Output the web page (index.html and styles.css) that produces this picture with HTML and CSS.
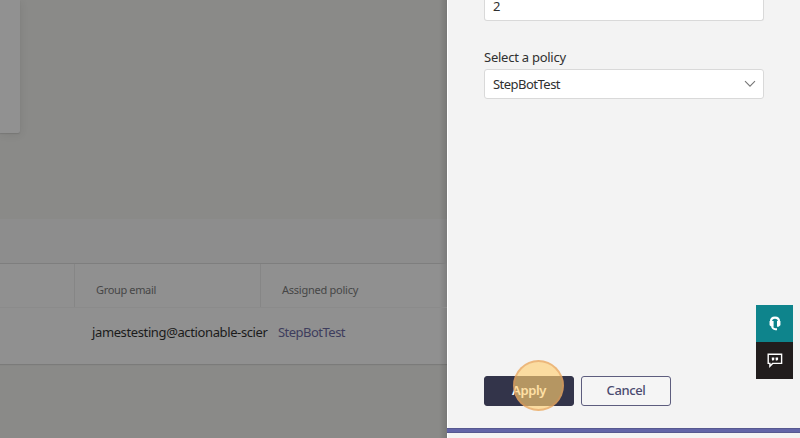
FILE: index.html
```html
<!DOCTYPE html>
<html lang="en">
<head>
<meta charset="utf-8">
<title>Group policy assignment</title>
<link rel="stylesheet" href="styles.css">
</head>
<body>
<div class="app">
  <main class="page">
    <div class="card"></div>
    <section class="table">
      <div class="toolbar"></div>
      <div class="row head">
        <div class="cell first"></div>
        <div class="cell email"><span class="t-group">Group email</span></div>
        <div class="cell policy"><span class="t-assigned">Assigned policy</span></div>
      </div>
      <div class="row body">
        <div class="cell first"></div>
        <div class="cell email"><span class="t-mail">jamestesting@actionable-scier</span></div>
        <div class="cell policy"><a class="t-step">StepBotTest</a></div>
      </div>
    </section>
  </main>
  <aside class="panel">
    <div class="form">
      <div class="input rank"><span>2</span></div>
      <label class="label"><span>Select a policy</span></label>
      <div class="input select">
        <span class="t-step">StepBotTest</span>
        <svg width="12" height="8" viewBox="0 0 12 8"><path d="M1 1.2 6 6.2 11 1.2" fill="none" stroke="#777" stroke-width="1.1"/></svg>
      </div>
    </div>
    <div class="actions">
      <button class="btn primary"><span class="t-apply">Apply</span></button>
      <button class="btn"><span class="t-cancel">Cancel</span></button>
    </div>
    <div class="click"></div>
    <div class="bar"></div>
    <div class="dock">
      <div class="help">
        <svg width="12" height="15" viewBox="0 0 12 15"><path d="M2 9V5.5C2 2.8 3.5 1.6 6 1.6S10 2.8 10 5.5V9" fill="none" stroke="#fff" stroke-width="2.2"/><path d="M.6 5H4.6v5.8H2.4L.6 9.2zM11.4 5H8v5.8h1.6l1.8-1.6z" fill="#fff"/><path d="M3 10.4q.6 2.6 3.4 2.9H8" fill="none" stroke="#fff" stroke-width="1.9"/></svg>
      </div>
      <div class="chat">
        <svg width="16" height="15" viewBox="0 0 16 15"><path d="M1.2 1.2H14.6V10.4H5.6L2.9 13.2V10.4H1.2z" fill="none" stroke="#fff" stroke-width="1.4"/><path d="M4.8 4.4h2.5v2L6.4 7.4H5V6.5h-.2zM8.6 4.4h2.5v2l-.9 1H8.8V6.5h-.2z" fill="#fff"/></svg>
      </div>
    </div>
  </aside>
</div>
</body>
</html>
```
FILE: styles.css
```css
* { box-sizing: border-box; }
body {
  margin: 0;
  font-family: "Noto Sans", "Open Sans", sans-serif;
  font-size: 13px;
  color: #303030;
}
.app { display: flex; width: 800px; height: 438px; overflow: hidden; }
.page {
  width: 447px;
  background: linear-gradient(to left, rgba(0,0,0,.13), transparent 8px), #8a8a88;
}
.card {
  width: 20px;
  height: 133px;
  background: #919191;
  border-bottom-right-radius: 2px;
  box-shadow: 0 1px 1px rgba(0,0,0,.1), 1px 2px 9px rgba(0,0,0,.07);
}
.table {
  margin-top: 86px;
  height: 145px;
  background: linear-gradient(to left, rgba(0,0,0,.13), transparent 8px), #909090;
  box-shadow: 0 1px 1px rgba(0,0,0,.1);
}
.toolbar { height: 45px; background: rgba(0,0,0,.015); border-bottom: 1px solid #7e7e7e; }
.row { display: flex; align-items: stretch; }
.cell { display: flex; align-items: center; white-space: nowrap; }
.head { height: 44px; border-bottom: 1px solid #8b8b8b; font-size: 11px; color: #464646; }
.head .cell { padding-top: 8px; }
.first { width: 75px; }
.email { width: 186px; padding-left: 17px; }
.head .email { padding-left: 21px; }
.policy { flex: 1; padding-left: 17px; }
.head .policy { padding-left: 21px; }
.head .first, .head .email { border-right: 1px solid #868686; }
.body { height: 56px; }
.body .cell { padding-bottom: 9px; }
.body .email { color: #1b1b1b; }
.body .policy { color: #3e3d5d; }
.t-group { letter-spacing: -.35px; }
.t-assigned { letter-spacing: -.25px; }
.t-mail { letter-spacing: -.38px; }
.t-step { letter-spacing: -.52px; }

.panel {
  position: relative;
  display: flex;
  flex-direction: column;
  width: 353px;
  background: #f3f3f3;
  border-left: 1px solid #fff;
}
.form { padding: 0 36px; }
.input {
  display: flex;
  align-items: center;
  height: 30px;
  padding: 0 7px 0 8px;
  background: #fff;
  border: 1px solid #d9d9d9;
  border-radius: 3px;
}
.rank { height: 21px; padding-bottom: 7px; border-top: 0; border-radius: 0 0 3px 3px; line-height: 13px; }
.label { display: flex; align-items: flex-end; height: 48px; padding-bottom: 3px; letter-spacing: -.25px; }
.select { justify-content: space-between; }
.actions { display: flex; gap: 7px; margin-top: 277px; padding-left: 36px; }
.btn {
  width: 90px;
  height: 30px;
  padding: 0 0 2px;
  font: 500 13px "Noto Sans", "Open Sans", sans-serif;
  color: #4b4b70;
  background: #f5f5f5;
  border: 1px solid #5d5d7e;
  border-radius: 3px;
}
.primary { color: #fff; background: #33344a; border-color: #33344a; font-weight: 600; }
.t-apply { letter-spacing: -.4px; }
.t-cancel { letter-spacing: -.4px; }
.click {
  position: absolute;
  left: 65px;
  top: 360px;
  width: 51px;
  height: 51px;
  border: 2px solid rgba(222,145,85,.5);
  border-radius: 50%;
  background: rgba(255,207,112,.64);
}
.bar {
  height: 5px;
  margin: 22px 0 0 -1px;
  background: #6264a7;
  border: solid #56588f;
  border-width: 1px 0;
}
.dock { position: absolute; left: 308px; top: 305px; width: 37px; }
.help, .chat { display: flex; align-items: center; justify-content: center; height: 37px; background: #0e848c; }
.chat { background: #211d1d; }
```
